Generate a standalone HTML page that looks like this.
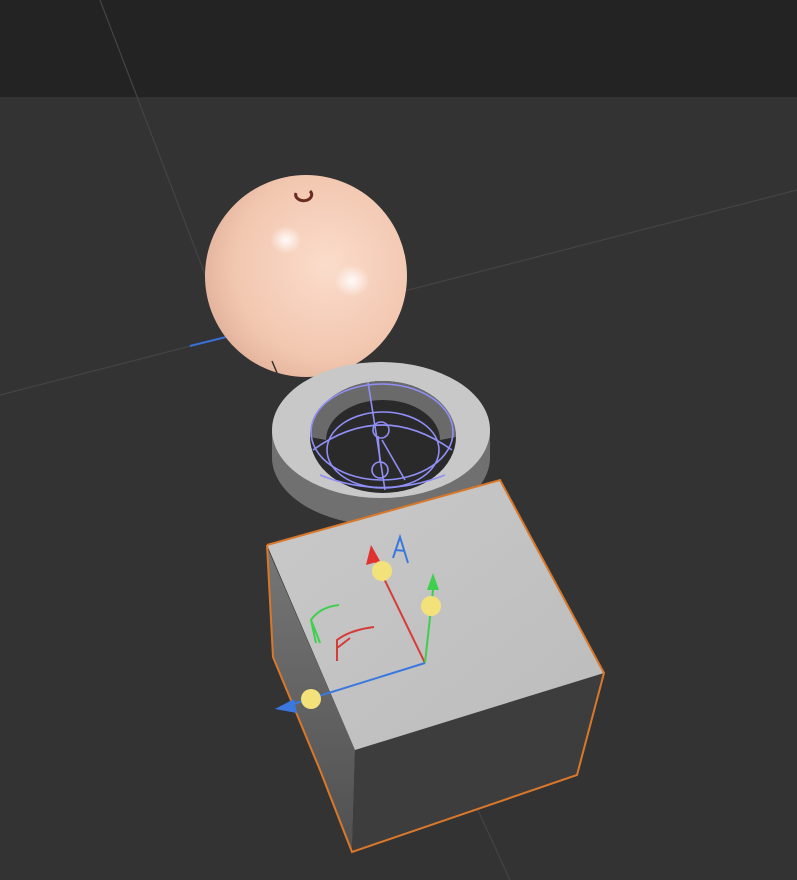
<!DOCTYPE html>
<html><head><style>html,body{margin:0;padding:0;background:#333}svg{display:block}</style></head>
<body>
<svg width="797" height="880" viewBox="0 0 797 880" xmlns="http://www.w3.org/2000/svg">
<defs>
<radialGradient id="sp" cx="0.6" cy="0.45" r="0.7">
<stop offset="0" stop-color="#fbdccb"/><stop offset="0.65" stop-color="#f2c7b0"/><stop offset="1" stop-color="#dcaa92"/></radialGradient>
<radialGradient id="hl" cx="0.5" cy="0.5" r="0.5"><stop offset="0" stop-color="#fff" stop-opacity="0.9"/><stop offset="1" stop-color="#fff" stop-opacity="0"/></radialGradient>
<linearGradient id="lf" x1="0" y1="0" x2="0" y2="1"><stop offset="0" stop-color="#767676"/><stop offset="1" stop-color="#505050"/></linearGradient>
<linearGradient id="tp" x1="0" y1="0" x2="1" y2="1"><stop offset="0" stop-color="#c9c9c9"/><stop offset="1" stop-color="#bcbcbc"/></linearGradient>
</defs>
<rect width="797" height="97" fill="#232323"/>
<rect y="97" width="797" height="783" fill="#333"/>
<g stroke="#444" stroke-width="1.2" fill="none">
<line x1="100" y1="0" x2="232" y2="345"/>
<line x1="0" y1="395" x2="797" y2="190"/>
<line x1="455" y1="760" x2="510" y2="880"/>
</g>
<line x1="190" y1="346" x2="230" y2="336" stroke="#3b6fd8" stroke-width="2"/>
<circle cx="306" cy="276" r="101" fill="url(#sp)"/>
<ellipse cx="286" cy="240" rx="16" ry="14" fill="url(#hl)"/>
<ellipse cx="352" cy="281" rx="18" ry="16" fill="url(#hl)"/>
<path d="M296 193 a8 6 0 1 0 14 -2" stroke="#6b2a22" stroke-width="3" fill="none"/>
<line x1="272" y1="361" x2="280" y2="380" stroke="#333" stroke-width="1.5"/>
<!-- ring -->
<path d="M272 432 L272 457 A109 68 0 0 0 490 457 L490 432 Z" fill="#707070"/>
<ellipse cx="381" cy="457" rx="109" ry="68" fill="#707070"/>
<ellipse cx="381" cy="430" rx="109" ry="68" fill="#c8c8c8"/>
<ellipse cx="383" cy="437" rx="73" ry="56" fill="#2a2a2a"/>
<path d="M310 437 A73 56 0 0 1 456 437 L440 440 A57 40 0 0 0 326 440 Z" fill="#6a6a6a"/>
<g stroke="#8f8ff5" stroke-width="1.6" fill="none">
<ellipse cx="382" cy="432" rx="71" ry="48"/>
<path d="M313 450 Q382 400 452 450"/>
<ellipse cx="383" cy="450" rx="56" ry="38"/>
<line x1="368" y1="382" x2="385" y2="490"/>
<line x1="382" y1="440" x2="405" y2="480"/>
<circle cx="381" cy="430" r="8"/><circle cx="380" cy="470" r="8"/>
<line x1="378" y1="436" x2="380" y2="462"/>
<path d="M320 475 Q382 500 445 475"/>
</g>
<!-- cube -->
<polygon points="267,547 355,750 352,852 320,770 273,657" fill="url(#lf)"/>
<polygon points="355,750 604,673 577,775 352,852" fill="#3d3d3d"/>
<polygon points="267,545 500,480 604,673 355,750" fill="url(#tp)"/>
<polyline points="267,545 500,480 604,673 577,775 352,852 320,770 273,657 267,545" fill="none" stroke="#d9782a" stroke-width="2"/>
<!-- gizmo -->
<line x1="425" y1="663" x2="375" y2="560" stroke="#d83a3a" stroke-width="2"/>
<polygon points="371,545 366,565 380,561" fill="#e03030"/>
<line x1="425" y1="663" x2="433" y2="590" stroke="#3fcf4f" stroke-width="2"/>
<polygon points="433,573 427,590 439,590" fill="#3fcf4f"/>
<line x1="425" y1="663" x2="290" y2="705" stroke="#3a78e0" stroke-width="2"/>
<polygon points="275,709 294,699 297,713" fill="#3a78e0"/>
<circle cx="382" cy="571" r="10" fill="#f3e27a"/>
<circle cx="431" cy="606" r="10" fill="#f3e27a"/>
<circle cx="311" cy="699" r="10" fill="#f3e27a"/>
<path d="M393 558 L400 537 L408 563 M396 550 L405 551" stroke="#3a78e0" stroke-width="2" fill="none"/>
<path d="M316 643 L311 620 Q320 607 339 605 M311 620 Q316 632 320 643" stroke="#3fcf4f" stroke-width="2" fill="none"/>
<path d="M337 661 L337 640 Q350 630 374 627 M337 648 Q345 642 350 638" stroke="#d83a3a" stroke-width="2" fill="none"/>
</svg>
</body></html>
